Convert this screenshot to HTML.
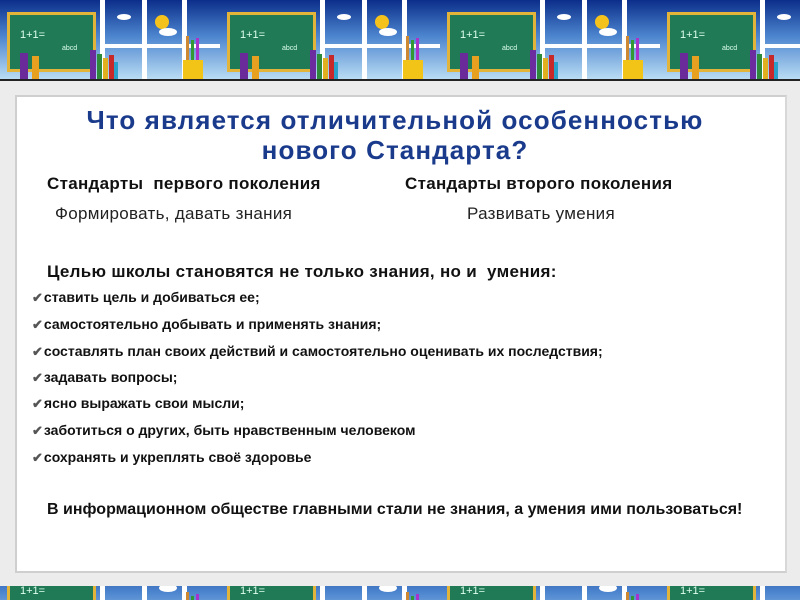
<!DOCTYPE html>
<html><head><meta charset="utf-8"><style>
body{margin:0;width:800px;height:600px;overflow:hidden;background:#e9e9e9;font-family:"Liberation Sans",sans-serif;position:relative}
.hdr{position:absolute;left:0;top:0;width:800px;height:81px}
.ftr{position:absolute;left:0;top:586px;width:800px;height:14px;overflow:hidden}
.frame{position:absolute;left:0;top:81px;width:800px;height:505px;background:#ececec}
.box{position:absolute;left:15px;top:95px;width:768px;height:474px;background:#fff;border:2px solid #cfcfcf;border-right-color:#d8d8d8}
.t{position:absolute;white-space:nowrap}
h1{position:absolute;margin:0;left:0;width:790px;top:105px;text-align:center;color:#1a3a8c;font-size:26px;letter-spacing:1.1px;line-height:30px;font-weight:bold}
.b{font-weight:bold;font-size:17px;letter-spacing:.3px;color:#111}
.n{font-size:17px;letter-spacing:.3px;color:#222}
.li{font-size:14px;font-weight:bold;color:#111;left:32px}
.li:before{content:"✔";font-size:13px;color:#555;margin-right:1px}
</style></head><body>
<svg class="hdr" width="800" height="81">
<defs>
<linearGradient id="sky" x1="0" y1="0" x2="0" y2="1"><stop offset="0" stop-color="#0b2e8a"/><stop offset=".45" stop-color="#4d86cf"/><stop offset="1" stop-color="#bfe0f5"/></linearGradient>
<pattern id="p" width="220" height="81" patternUnits="userSpaceOnUse">
<rect width="220" height="81" fill="url(#sky)"/>
<rect x="100" y="0" width="5" height="81" fill="#fff"/><rect x="142" y="0" width="5" height="81" fill="#fff"/><rect x="182" y="0" width="5" height="81" fill="#fff"/>
<rect x="100" y="44" width="120" height="4" fill="#fff"/>
<circle cx="162" cy="22" r="7" fill="#f5c21c"/><ellipse cx="168" cy="32" rx="9" ry="4" fill="#fff"/><ellipse cx="124" cy="17" rx="7" ry="3" fill="#fff"/>
<rect x="7" y="12" width="89" height="60" fill="#e2b43a"/><rect x="10" y="15" width="83" height="54" fill="#1f7a55"/>
<text x="20" y="38" fill="#dfe" font-size="11" font-family="Liberation Sans">1+1=</text>
<text x="62" y="50" fill="#dfe" font-size="7" font-family="Liberation Sans">abcd</text>
<rect x="20" y="53" width="8" height="27" fill="#6a2a9a"/><rect x="32" y="56" width="7" height="24" fill="#e8a020"/>
<rect x="90" y="50" width="6" height="30" fill="#6c2ca0"/><rect x="97" y="54" width="5" height="26" fill="#2e8a3a"/><rect x="103" y="58" width="5" height="22" fill="#e0b020"/><rect x="109" y="55" width="5" height="25" fill="#c82828"/><rect x="114" y="62" width="4" height="18" fill="#2aa0c8"/>
<rect x="183" y="60" width="20" height="20" fill="#f2c418"/><rect x="186" y="36" width="3" height="24" fill="#c83"/><rect x="191" y="40" width="3" height="20" fill="#393"/><rect x="196" y="38" width="3" height="22" fill="#a3c"/>
<rect x="0" y="79" width="220" height="2" fill="#222"/>
</pattern></defs>
<rect width="800" height="81" fill="url(#p)"/>
</svg>
<div class="frame"></div>
<div class="box"></div>
<svg class="ftr" width="800" height="14"><g transform="translate(0,-30)"><rect y="0" width="800" height="81" fill="url(#p)"/></g></svg>
<h1>Что является отличительной особенностью<br>нового Стандарта?</h1>
<div class="t b" style="left:47px;top:174px">Стандарты&nbsp; первого поколения</div>
<div class="t b" style="left:405px;top:174px">Стандарты второго поколения</div>
<div class="t n" style="left:55px;top:204px">Формировать, давать знания</div>
<div class="t n" style="left:467px;top:204px">Развивать умения</div>
<div class="t b" style="left:47px;top:262px">Целью школы становятся не только знания, но и&nbsp; умения:</div>
<div class="t li" style="top:289px">ставить цель и добиваться ее;</div>
<div class="t li" style="top:316px">самостоятельно добывать и применять знания;</div>
<div class="t li" style="top:343px">составлять план своих действий и самостоятельно оценивать их последствия;</div>
<div class="t li" style="top:369px">задавать вопросы;</div>
<div class="t li" style="top:395px">ясно выражать свои мысли;</div>
<div class="t li" style="top:422px">заботиться о других, быть нравственным человеком</div>
<div class="t li" style="top:449px">сохранять и укреплять своё здоровье</div>
<div class="t" style="left:47px;top:501px;font-size:16px;font-weight:bold;color:#111">В информационном обществе главными стали не знания, а умения ими пользоваться!</div>
</body></html>
